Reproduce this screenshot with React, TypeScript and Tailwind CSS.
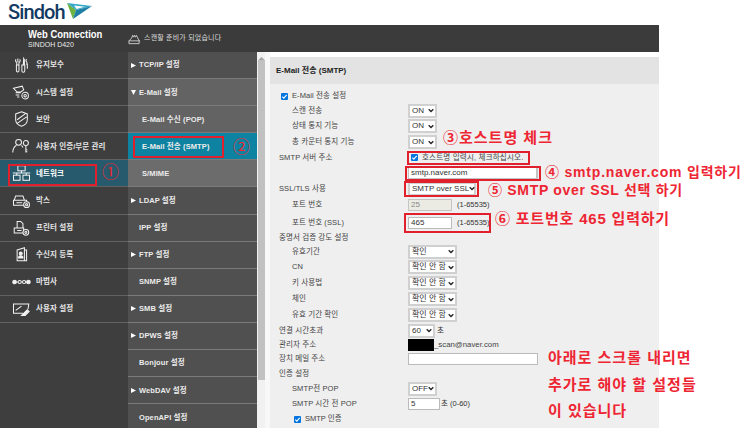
import React from "react";

const kr = "font-['Liberation_Sans','Noto_Sans_CJK_KR',sans-serif]";

const iconProps = { width: 19, height: 16, viewBox: "0 0 26 22", fill: "none", stroke: "#f2f2f2", strokeWidth: 1.4 };

const icons: React.ReactNode[] = [
  <svg {...iconProps}><path d="M8 2v5M5.500 3c-1.500 2 0 4 1 4.500V11h3V7.500c1-.5 2.500-2.500 1-4.500M6 11h3.500v8a1.750 1.750 0 0 1-3.500 0zM16 2l1 2v7h-1.500zM20 3c-1 1-1 3 .5 4.500V10M13.500 11h4v8a2 2 0 0 1-4 0zM19.500 10h1.500v6" /></svg>,
  <svg {...iconProps}><path d="M2 6l12-3 2 5-4 3H7zM5 12h7M5 15h5M7 18h3" /><circle cx="18" cy="16" r="4.500" /><circle cx="18" cy="16" r="1.700" /></svg>,
  <svg {...iconProps}><path d="M13 1l8 3v8c0 4-3.500 7.500-8 9-4.500-1.500-8-5-8-9V4zM7 12l11-8M7 17l13-9" /></svg>,
  <svg {...iconProps}><circle cx="9" cy="6" r="4" /><path d="M1 20c0-5 2-8 5-10M13 10c1 1 1.500 2 2 3" /><circle cx="19" cy="7" r="3.500" /><path d="M19 10.500V20M19 16h2M19 19h2" /></svg>,
  <svg {...iconProps}><rect x="8" y="1" width="10" height="7" /><rect x="2" y="14" width="9" height="7" /><rect x="15" y="14" width="9" height="7" /><path d="M1 11h24M13 8v3M6.500 11v3M19.500 11v3" /></svg>,
  <svg {...iconProps}><path d="M3 10l2-6h10l2 6M2 10h18v7H2zM6 13.500h8" /><circle cx="20" cy="16" r="4" fill="#3e3e3e" /><circle cx="20" cy="16" r="1.400" /></svg>,
  <svg {...iconProps}><path d="M7 2h5l3 3v6H7zM3 11h13v7H3zM7 14.500h6" /><circle cx="19" cy="17" r="4" fill="#3e3e3e" /><circle cx="19" cy="17" r="1.400" /></svg>,
  <svg {...iconProps}><path d="M7 4l10-3v18H7zM17 4h3v15h-3" /><circle cx="12" cy="9" r="2" fill="#f2f2f2" /><path d="M9 15c0-2 1-3 3-3s3 1 3 3z" fill="#f2f2f2" /></svg>,
  <svg {...iconProps}><circle cx="3.500" cy="11" r="2.500" fill="#f2f2f2" /><circle cx="10.500" cy="11" r="2.200" /><circle cx="16.500" cy="11" r="2.200" /><circle cx="22.500" cy="11" r="2.500" fill="#f2f2f2" /><path d="M6 11h2M13 11h1M19 11h1" /></svg>,
  <svg {...iconProps}><path d="M15 17H2V4h21l-1 7M5 13l8-6" /><path d="M18 20l-5 0 8-8 2.500 2.500z" fill="#f2f2f2" /></svg>,
];

const navLabels = ["유지보수", "시스템 설정", "보안", "사용자 인증/부문 관리", "네트워크", "박스", "프린터 설정", "수신지 등록", "마법사", "사용자 설정"];

type Arrow = "r" | "d" | undefined;
const subItems: { t: string; arrow?: Arrow; bg: string; indent?: boolean }[] = [
  { t: "TCP/IP 설정", arrow: "r", bg: "bg-[#505050]" },
  { t: "E-Mail 설정", arrow: "d", bg: "bg-[#636363]" },
  { t: "E-Mail 수신 (POP)", bg: "bg-[#636363]", indent: true },
  { t: "E-Mail 전송 (SMTP)", bg: "bg-[#0e83a1]", indent: true },
  { t: "S/MIME", bg: "bg-[#6c6c6c]", indent: true },
  { t: "LDAP 설정", arrow: "r", bg: "bg-[#505050]" },
  { t: "IPP 설정", bg: "bg-[#505050]" },
  { t: "FTP 설정", arrow: "r", bg: "bg-[#505050]" },
  { t: "SNMP 설정", bg: "bg-[#505050]" },
  { t: "SMB 설정", arrow: "r", bg: "bg-[#505050]" },
  { t: "DPWS 설정", arrow: "r", bg: "bg-[#505050]" },
  { t: "Bonjour 설정", bg: "bg-[#505050]" },
  { t: "WebDAV 설정", arrow: "r", bg: "bg-[#505050]" },
  { t: "OpenAPI 설정", bg: "bg-[#505050]" },
];

function Sel({ w, v }: { w: string; v: string }) {
  return (
    <div className={`${w} h-[14px] bg-white border-2 border-[#d0d0d0] pl-[2px] pr-[1px] flex items-center justify-between text-[8px] text-[#333] whitespace-nowrap shrink-0`}>
      <span>{v}</span>
      <svg width="6" height="5" viewBox="0 0 6 5" className="shrink-0"><path d="M0.700 1.200L3 3.500l2.300-2.300" fill="none" stroke="#222" strokeWidth="1.300" /></svg>
    </div>
  );
}

function Row({ h, sub, label, children }: { h: string; sub?: boolean; label?: React.ReactNode; children?: React.ReactNode }) {
  return (
    <div className={`${h} flex items-center shrink-0`}>
      <div className={`w-[129px] shrink-0 ${sub ? "pl-[13px]" : ""} text-[#444] text-[7.5px] tracking-[0.1px] whitespace-nowrap`}>{label}</div>
      {children}
    </div>
  );
}

function Check() {
  return (
    <span className="inline-flex w-[7px] h-[7px] rounded-[1px] bg-[#0075e0] items-center justify-center shrink-0">
      <svg width="7" height="7" viewBox="0 0 7 7"><path d="M1.300 3.600l1.500 1.500 2.900-3.200" fill="none" stroke="#fff" strokeWidth="1.100" /></svg>
    </span>
  );
}

function Box({ className }: { className: string }) {
  return <div className={`absolute border-2 border-[#e0202c] ${className}`} />;
}

function Note({ className, children }: { className: string; children: React.ReactNode }) {
  return <div className={`absolute font-bold text-[#ee2532] whitespace-nowrap leading-none ${className}`}>{children}</div>;
}

export default function App() {
  return (
    <div className={`relative w-[743px] h-[428px] overflow-hidden bg-white flex flex-col ${kr}`}>
      <div className="h-[25px] shrink-0 flex items-center pl-[8px] bg-white">
        <span className="text-[20px] font-medium text-[#123a62] leading-none font-['Roboto',sans-serif] tracking-[-0.9px] -mt-[1px]">Sindoh</span>
        <svg width="27" height="18" viewBox="0 0 27 18" className="ml-[1px] -mt-[3px]">
          <path d="M1 1L7 17l3-9z" fill="#6cb33f" />
          <path d="M1 1l25 3L10 8z" fill="#35a8c6" />
          <path d="M26 4L7 17l3-9z" fill="#1e7ea6" />
          <path d="M8 3.500l11 1.300L10.500 7z" fill="#fff" />
        </svg>
      </div>
      <div className="w-[659px] flex-1 flex flex-col min-h-0">
        <div className="h-[27px] shrink-0 bg-[#3b3b3b] flex items-center text-white">
          <div className="w-[128px] pl-[28px] leading-none">
            <div className="text-[10.5px] font-bold origin-left scale-x-90 whitespace-nowrap">Web Connection</div>
            <div className="text-[7px] mt-[2px] text-[#e8e8e8]">SINDOH D420</div>
          </div>
          <svg width="13" height="12" viewBox="0 0 14 12" fill="none" stroke="#ddd" strokeWidth="0.9"><path d="M1 8l3-3 1-3 1 2 1-2 1 2 1-2 3 6v3H1zM1 8h12" /></svg>
          <span className="ml-[3px] text-[7px] text-[#dcdcdc] tracking-[0.2px]">스캔할 준비가 되었습니다</span>
        </div>
        <div className="flex-1 flex min-h-0">
          <div className="w-[128px] shrink-0 bg-[#3e3e3e] flex flex-col">
            {navLabels.map((l, i) => (
              <div key={l} className={`h-[27.1px] shrink-0 flex items-center border-b border-[#626262] text-[7.5px] font-bold tracking-[0.1px] ${i === 4 ? "bg-[#265a6c] text-white" : "text-[#e4e4e4]"}`}>
                <span className="w-[36px] pl-[12px] shrink-0 flex">{icons[i]}</span>
                <span>{l}</span>
              </div>
            ))}
          </div>
          <div className="w-[129px] shrink-0 flex flex-col overflow-hidden">
            {subItems.map((s) => (
              <div key={s.t} className={`h-[27.1px] shrink-0 flex items-center border-b border-[#7a7a7a] text-[7.5px] font-bold text-[#ececec] tracking-[0.1px] ${s.bg}`}>
                <span className="w-[11px] pl-[3px] shrink-0 flex">
                  {s.arrow === "r" && <svg width="5" height="5" viewBox="0 0 5 5"><path d="M0 0l5 2.500L0 5z" fill="#fff" /></svg>}
                  {s.arrow === "d" && <svg width="5" height="5" viewBox="0 0 5 5"><path d="M0 0h5L2.500 5z" fill="#fff" /></svg>}
                </span>
                <span className={s.indent ? "pl-[3px]" : ""}>{s.t}</span>
              </div>
            ))}
          </div>
          <div className="w-[8px] shrink-0 bg-[#f1f1f1] pt-[5px] pl-[1px] flex flex-col items-stretch">
            <svg width="7" height="3" viewBox="0 0 7 3" className="shrink-0"><path d="M3.500 0L6.500 3h-6z" fill="#a3a3a3" /></svg>
            <div className="h-[320px] bg-[#c1c1c1]" />
          </div>
          <div className="w-[5px] shrink-0 bg-[#f8f8f8]" />
          <div className="flex-1 mt-[5px] bg-[#efefef] flex flex-col min-w-0 text-[8px]">
            <div className="h-[27px] shrink-0 bg-[#e3e3e3] flex items-center pl-[6px] font-bold text-[8px] text-[#222]">E-Mail 전송 (SMTP)</div>
            <div className="pl-[9px] pt-[5px] flex flex-col">
              <div className="h-[14px] flex items-center gap-[4px] pl-[2px] text-[#444] text-[7.5px] tracking-[0.1px] shrink-0"><Check /><span>E-Mail 전송 설정</span></div>
              <Row h="h-[15px]" sub label="스캔 전송"><Sel w="w-[29px]" v="ON" /></Row>
              <Row h="h-[16px]" sub label="상태 통지 기능"><Sel w="w-[29px]" v="ON" /></Row>
              <Row h="h-[16px]" sub label="총 카운터 통지 기능"><Sel w="w-[29px]" v="ON" /></Row>
              <Row h="h-[15px]" label="SMTP 서버 주소">
                <div className="flex items-center pl-[3px] gap-[4px] text-[#444] text-[7.5px] tracking-[0.2px] whitespace-nowrap"><Check /><span>호스트명 입력시, 체크하십시오.</span></div>
              </Row>
              <Row h="h-[16px]">
                <div className="w-[130px] h-[12px] bg-white border border-r-2 border-[#c4c4c4] pl-[2px] flex items-center text-[#333]">smtp.naver.com</div>
              </Row>
              <Row h="h-[15px]" label="SSL/TLS 사용"><Sel w="w-[68px]" v="SMTP over SSL" /></Row>
              <Row h="h-[18px]" sub label="포트 번호">
                <div className="w-[44px] h-[12px] bg-[#ebebe4] border border-[#c4c4c4] pl-[2px] flex items-center text-[#888] shrink-0">25</div>
                <span className="ml-[5px] text-[#333] text-[7.5px]">(1-65535)</span>
              </Row>
              <Row h="h-[17px]" sub label="포트 번호 (SSL)">
                <div className="w-[44px] h-[12px] bg-white border border-[#bbb] pl-[2px] flex items-center text-[#333] shrink-0">465</div>
                <span className="ml-[5px] text-[#333] text-[7.5px]">(1-65535)</span>
              </Row>
              <Row h="h-[13px]" label="중명서 검증 강도 설정" />
              <Row h="h-[15px]" sub label="유효기간"><Sel w="w-[49px]" v="확인" /></Row>
              <Row h="h-[16px]" sub label="CN"><Sel w="w-[49px]" v="확인 안 함" /></Row>
              <Row h="h-[16px]" sub label="키 사용법"><Sel w="w-[49px]" v="확인 안 함" /></Row>
              <Row h="h-[16px]" sub label="체인"><Sel w="w-[49px]" v="확인 안 함" /></Row>
              <Row h="h-[16px]" sub label="유효 기간 확인"><Sel w="w-[49px]" v="확인 안 함" /></Row>
              <Row h="h-[15px]" label="연결 시간초과"><Sel w="w-[27px]" v="60" /><span className="ml-[2px] text-[#333] text-[7.5px]">초</span></Row>
              <Row h="h-[14px]" label="관리자 주소">
                <span className="w-[26px] h-[12px] bg-black shrink-0" />
                <span className="text-[#444] text-[7.8px]">_scan@naver.com</span>
              </Row>
              <Row h="h-[14px]" label="장치 메일 주소"><div className="w-[130px] h-[12px] bg-white border border-[#bbb] shrink-0" /></Row>
              <Row h="h-[15px]" label="인증 설정" />
              <Row h="h-[15px]" sub label="SMTP전 POP"><Sel w="w-[29px]" v="OFF" /></Row>
              <Row h="h-[16px]" sub label="SMTP 시간 전 POP">
                <div className="w-[32px] h-[12px] bg-white border border-[#bbb] pl-[2px] flex items-center text-[#333] shrink-0">5</div>
                <span className="ml-[1px] text-[#333] text-[7.5px]">초 (0-60)</span>
              </Row>
              <div className="h-[14px] flex items-center gap-[4px] pl-[15px] text-[#444] text-[7.5px] shrink-0"><Check /><span>SMTP 인증</span></div>
            </div>
          </div>
        </div>
      </div>

      <Box className="left-[8px] top-[164px] w-[89px] h-[22px]" />
      <Box className="left-[133px] top-[136px] w-[91px] h-[22px]" />
      <Box className="left-[407px] top-[151px] w-[123px] h-[14px]" />
      <Box className="left-[405px] top-[166px] w-[136px] h-[15px]" />
      <Box className="left-[404px] top-[181px] w-[75px] h-[16px]" />
      <Box className="left-[404px] top-[213px] w-[87px] h-[20px]" />

      <Note className="left-[102px] top-[164px] text-[17px] font-normal">①</Note>
      <Note className="left-[233px] top-[139px] text-[17px] font-normal">②</Note>
      <Note className="left-[443px] top-[130px] text-[15px] tracking-[1px]">③호스트명 체크</Note>
      <Note className="left-[545px] top-[165px] text-[14px] tracking-[0.8px]">④ smtp.naver.com 입력하기</Note>
      <Note className="left-[488px] top-[183px] text-[14px] tracking-[0.7px]">⑤ SMTP over SSL 선택 하기</Note>
      <Note className="left-[495px] top-[211px] text-[15px] tracking-[0.8px]">⑥ 포트번호 465 입력하기</Note>
      <Note className="left-[548px] top-[350px] text-[15px] tracking-[1px]">아래로 스크롤 내리면</Note>
      <Note className="left-[548px] top-[377px] text-[15px] tracking-[1px]">추가로 해야 할 설정들</Note>
      <Note className="left-[548px] top-[403px] text-[15px] tracking-[1px]">이 있습니다</Note>
    </div>
  );
}
